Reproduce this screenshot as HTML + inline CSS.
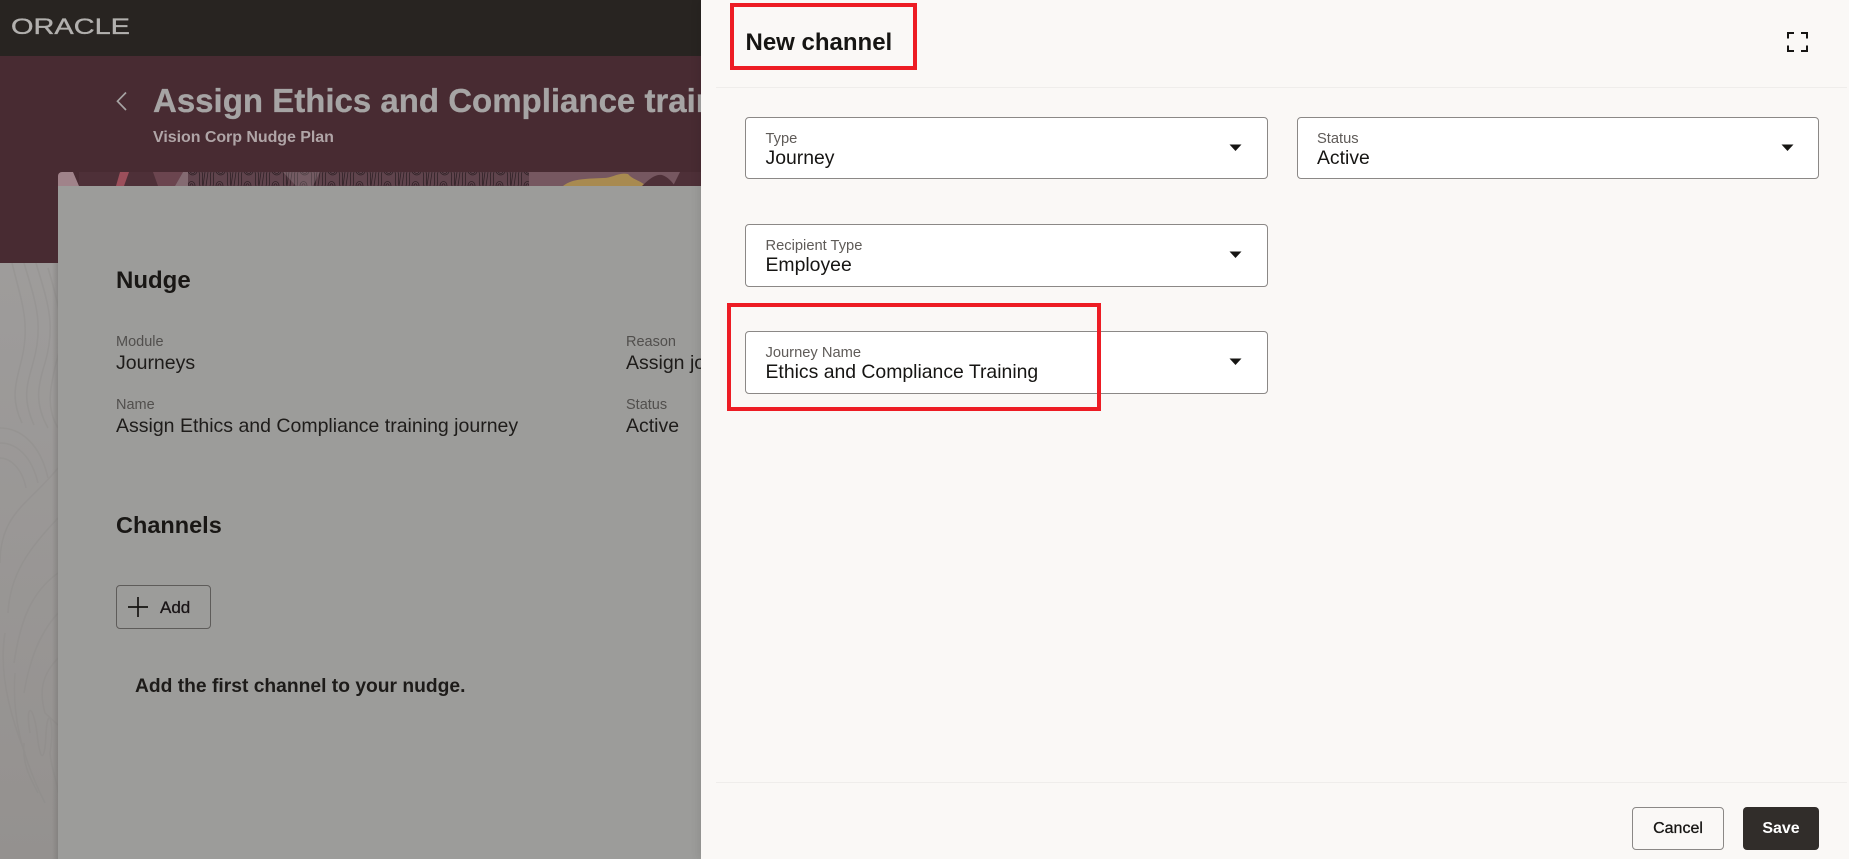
<!DOCTYPE html>
<html lang="en"><head><meta charset="utf-8"><title>New channel</title>
<style>
html,body{margin:0;padding:0;width:1849px;height:859px;overflow:hidden;background:#9c9a98}
body{position:relative;font-family:"Liberation Sans",sans-serif}
.a{position:absolute;white-space:nowrap}
.lbl{font-size:14.5px;line-height:18px;color:#514f4d}
.val{font-size:19.5px;line-height:24px;color:#1e1c1a}
.h{font-size:24px;line-height:30px;font-weight:700;color:#191715}
.fld{position:absolute;box-sizing:border-box;background:#fff;border:1px solid #8b8886;border-radius:4px}
.flbl{font-size:14.7px;line-height:18px;color:#5f5b58}
.fval{font-size:19.4px;line-height:24px;color:#161513}
.red{position:absolute;box-sizing:border-box;border:4px solid #ed1c24}
</style></head><body>
<div class="a" style="left:0;top:0;width:701px;height:56px;background:#282421"></div>
<svg class="a" style="left:11px;top:14px" width="120" height="24" viewBox="0 0 120 24"><text x="0" y="20" font-family="Liberation Sans" font-size="22" fill="#b2b0ae" stroke="#b2b0ae" stroke-width=".35" textLength="119" lengthAdjust="spacingAndGlyphs">ORACLE</text></svg>
<div class="a" style="left:0;top:56px;width:701px;height:207px;background:#482b32"></div>
<svg class="a" style="left:113px;top:89px" width="18" height="24" viewBox="0 0 18 24" fill="none" stroke="#a6a3a3" stroke-width="1.7"><path d="M13 3.5L4.5 12.2L13 21"/></svg>
<div class="a" style="left:153px;top:80px;font-size:33px;line-height:42px;font-weight:700;color:#a6a4a4;width:548px;overflow:hidden;-webkit-text-stroke:.3px #a6a4a4">Assign Ethics and Compliance training journey</div>
<div class="a" style="left:153px;top:127.5px;font-size:16px;line-height:20px;font-weight:700;color:#b0a5a7;letter-spacing:-.05px">Vision Corp Nudge Plan</div>

<svg class="a" style="left:0;top:263px" width="58" height="596" viewBox="0 0 58 596">
<defs><linearGradient id="bg" x1="0" y1="0" x2="0" y2="1"><stop offset="0" stop-color="#9e9c9b"/><stop offset="1" stop-color="#94918f"/></linearGradient></defs>
<rect width="58" height="596" fill="url(#bg)"/>
<g fill="none" stroke="#8b8987" stroke-width="1.6" opacity=".3">
<path d="M12 0C22 40 30 60 22 95C16 120 10 135 22 160"/>
<path d="M24 0C36 40 44 62 33 100C27 122 22 135 34 162"/>
<path d="M36 0C48 40 56 62 45 100C38 122 34 140 48 165"/>
<path d="M48 5C60 45 66 70 56 100C50 125 46 145 58 165"/>
<path d="M0 165C20 165 40 180 48 215"/>
<path d="M0 180C18 180 32 195 38 220"/>
<path d="M0 195C10 195 22 205 26 225"/>
<path d="M58 205C30 240 0 250 0 300"/>
<path d="M58 255C30 285 10 310 8 350"/>
<path d="M58 310C30 330 20 360 14 400"/>
<path d="M58 350C40 370 30 395 24 430"/>
<path d="M58 395C44 410 38 425 45 450L58 462"/>
<path d="M5 370C0 400 5 440 25 490"/>
<path d="M15 410C12 450 20 490 45 540"/>
<path d="M30 470C25 440 33 440 37 470C40 500 45 500 46 470C48 440 55 460 50 490C52 510 58 520 58 530"/>
<path d="M24 480C22 500 30 515 38 530"/>
</g></svg>
<div class="a" style="left:52px;top:263px;width:6px;height:596px;background:linear-gradient(90deg,rgba(110,108,106,0),rgba(110,108,106,.4))"></div>

<svg class="a" style="left:58px;top:172px" width="643" height="14" viewBox="0 0 643 14">
<defs>
<pattern id="fp" width="28" height="14" patternUnits="userSpaceOnUse"><rect width="28" height="14" fill="#5f434c"/>
<g fill="none" stroke="#2f2126" stroke-width=".8">
<path d="M1 0C3 5 0 9 2 14M4 0C6 5 3 9 5 14M7 0L5 14M10 0L8 14M13 0C11 5 14 9 12 14M16 0C14 5 17 9 15 14"/>
<path d="M18 14C18 8 25 8 25 14M20 14C20 11 23 11 23 14M18 0C21 4 25 4 27 0M20 0C22 2 24 2 25 0"/>
</g></pattern></defs>
<path d="M0 14V4a4 4 0 0 1 4-4H15L21 14Z" fill="#a0838a"/>
<rect x="21" width="622" height="14" fill="#4e3038"/>
<path d="M62 0H71L66 14H58Z" fill="#9c4f5b"/>
<path d="M95 0H125L117 14H100Z" fill="#6b454f"/>
<path d="M125 0H130V14H117Z" fill="#846b72"/>
<rect x="130" width="341" height="14" fill="url(#fp)"/>
<path d="M225 0H262L255 14H238Z" fill="#b4a4a8" opacity=".25"/>
<rect x="471" width="156" height="14" fill="#765760"/>
<path d="M505 14C515 6 530 7 545 6C555 6 560 0 570 2C575 8 582 8 588 14Z" fill="#a88a50"/>
<path d="M584 14C592 6 598 2 604 3C610 5 614 10 617 14Z" fill="#4e3038"/>
<path d="M615 14L622 0H637V14Z" fill="#4e3038"/>
</svg>

<div class="a" style="left:58px;top:186px;width:643px;height:673px;background:#9c9c9a"></div>
<div class="a h" style="left:116px;top:266px">Nudge</div>
<div class="a lbl" style="left:116px;top:333px">Module</div>
<div class="a val" style="left:116px;top:350.5px">Journeys</div>
<div class="a lbl" style="left:116px;top:396px">Name</div>
<div class="a val" style="left:116px;top:413.5px">Assign Ethics and Compliance training journey</div>
<div class="a lbl" style="left:626px;top:333px">Reason</div>
<div class="a val" style="left:626px;top:350.5px;width:75px;overflow:hidden">Assign journey</div>
<div class="a lbl" style="left:626px;top:396px">Status</div>
<div class="a val" style="left:626px;top:413.5px">Active</div>
<div class="a h" style="left:116px;top:510px;font-size:23.5px">Channels</div>
<div class="a" style="left:116px;top:585px;width:95px;height:44px;box-sizing:border-box;border:1px solid #5e5c5a;border-radius:4px"></div>
<svg class="a" style="left:127px;top:596px" width="22" height="22" viewBox="0 0 22 22" stroke="#161412" stroke-width="1.7"><path d="M11 1V21M1 11H21"/></svg>
<div class="a" style="left:160px;top:596.5px;font-size:17px;line-height:22px;color:#1a1517;-webkit-text-stroke:.3px #1a1517">Add</div>
<div class="a" style="left:135px;top:675px;font-size:19.25px;line-height:24px;font-weight:700;color:#1d1b19">Add the first channel to your nudge.</div>

<div class="a" style="left:701px;top:0;width:1148px;height:859px;background:#faf8f6;box-shadow:-3px 0 8px rgba(0,0,0,.08)"></div>
<div class="a" style="left:716px;top:87px;width:1131px;height:1px;background:#efedeb"></div>
<div class="a" style="left:745.5px;top:27.5px;font-size:24px;line-height:30px;font-weight:700;color:#161513">New channel</div>
<svg class="a" style="left:1787px;top:32px" width="21" height="20" viewBox="0 0 21 20" fill="none" stroke="#161513" stroke-width="2"><path d="M1 6.5V1H7M14 1H20V6.5M1 13.5V19H7M14 19H20V13.5"/></svg>

<div class="fld" style="left:745px;top:117px;width:523px;height:62px"></div>
<div class="a flbl" style="left:765.5px;top:129.5px">Type</div>
<div class="a fval" style="left:765.5px;top:145.5px">Journey</div>
<svg class="a" style="left:1229px;top:144px" width="13" height="8"><path d="M0.5 0.5H12.5L6.5 7Z" fill="#161513"/></svg>

<div class="fld" style="left:1297px;top:117px;width:522px;height:62px"></div>
<div class="a flbl" style="left:1317px;top:129.5px">Status</div>
<div class="a fval" style="left:1317px;top:145.5px">Active</div>
<svg class="a" style="left:1781px;top:144px" width="13" height="8"><path d="M0.5 0.5H12.5L6.5 7Z" fill="#161513"/></svg>

<div class="fld" style="left:745px;top:224px;width:523px;height:63px"></div>
<div class="a flbl" style="left:765.5px;top:236.5px">Recipient Type</div>
<div class="a fval" style="left:765.5px;top:252.5px">Employee</div>
<svg class="a" style="left:1229px;top:251px" width="13" height="8"><path d="M0.5 0.5H12.5L6.5 7Z" fill="#161513"/></svg>

<div class="fld" style="left:745px;top:331px;width:523px;height:63px"></div>
<div class="a flbl" style="left:765.5px;top:343.5px">Journey Name</div>
<div class="a fval" style="left:765.5px;top:359.5px">Ethics and Compliance Training</div>
<svg class="a" style="left:1229px;top:358px" width="13" height="8"><path d="M0.5 0.5H12.5L6.5 7Z" fill="#161513"/></svg>

<div class="red" style="left:730px;top:3px;width:187px;height:67px"></div>
<div class="red" style="left:727px;top:303px;width:374px;height:108px"></div>

<div class="a" style="left:716px;top:782px;width:1131px;height:1px;background:#efedeb"></div>
<div class="a" style="left:1632px;top:807px;width:92px;height:43px;box-sizing:border-box;border:1px solid #8b8886;border-radius:4px;text-align:center;font-size:16px;line-height:41px;color:#161513;-webkit-text-stroke:.3px #161513">Cancel</div>
<div class="a" style="left:1743px;top:807px;width:76px;height:43px;box-sizing:border-box;background:#312d2a;border-radius:4px;text-align:center;font-size:16px;line-height:43px;font-weight:700;color:#fff">Save</div>
</body></html>
